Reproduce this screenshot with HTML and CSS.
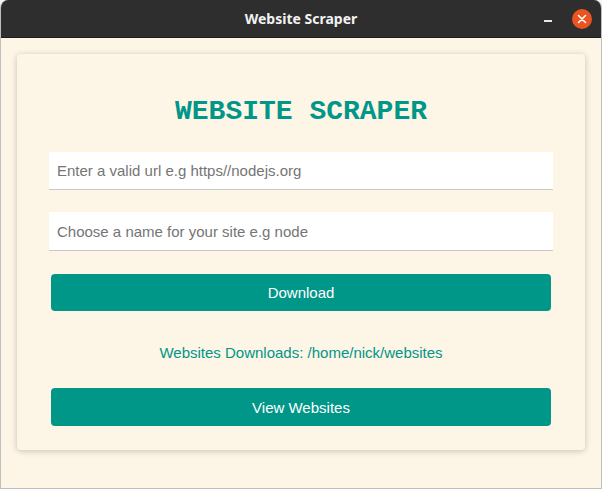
FILE: index.html
```html
<!DOCTYPE html>
<html>
<head>
<meta charset="utf-8">
<link rel="stylesheet" href="styles.css">
</head>
<body>
<div class="window">
  <header class="titlebar">
    <span class="title">Website Scraper</span>
    <div class="controls">
      <span class="minimize"></span>
      <span class="close">
        <svg width="10" height="10" viewBox="0 0 10 10"><path d="M1.5 1.5 L8.5 8.5 M8.5 1.5 L1.5 8.5" stroke="#fff" stroke-width="1.6" stroke-linecap="round"/></svg>
      </span>
    </div>
  </header>
  <main class="content">
    <section class="card">
      <h1 class="heading">WEBSITE SCRAPER</h1>
      <input class="field" type="text" placeholder="Enter a valid url e.g https//nodejs.org">
      <input class="field field-second" type="text" placeholder="Choose a name for your site e.g node">
      <button class="btn btn-download">Download</button>
      <p class="path">Websites Downloads: /home/nick/websites</p>
      <button class="btn btn-view">View Websites</button>
    </section>
  </main>
</div>
</body>
</html>
```

FILE: styles.css
```css
* { box-sizing: border-box; }
html, body {
  margin: 0;
  padding: 0;
  background: #f5f5f5;
}
.window {
  width: 602px;
  height: 489px;
  display: flex;
  flex-direction: column;
  border-radius: 8px 8px 0 0;
  overflow: hidden;
  background: #fdf5e6;
  border: 1px solid #bfbfbf;
  border-top: none;
}
.titlebar {
  position: relative;
  height: 38px;
  flex: none;
  background: #2f2e2e;
  border-bottom: 1px solid #1e1d1d;
  display: flex;
  align-items: center;
  justify-content: center;
}
.title {
  font-family: "Noto Sans", "DejaVu Sans", sans-serif;
  font-weight: 700;
  font-size: 14px;
  color: #f2f2f2;
}
.controls {
  position: absolute;
  right: 9px;
  top: 9px;
  display: flex;
  align-items: center;
  gap: 20px;
}
.minimize {
  display: block;
  width: 8px;
  height: 2px;
  background: #e8e8e8;
  margin-top: 4px;
}
.close {
  width: 20px;
  height: 20px;
  border-radius: 50%;
  background: #e95420;
  display: flex;
  align-items: center;
  justify-content: center;
}
.content {
  flex: 1;
  padding: 16px 16px 0 16px;
}
.card {
  background: #fdf5e6;
  border-radius: 4px;
  box-shadow: 0 1px 6px rgba(0, 0, 0, 0.22);
  padding: 42px 32px 24px 32px;
  display: flex;
  flex-direction: column;
  height: 396px;
}
.heading {
  margin: 0 0 24px 0;
  text-align: center;
  font-family: "Liberation Mono", "Courier New", monospace;
  font-weight: 700;
  font-size: 28px;
  line-height: 32px;
  color: #009688;
}
.field {
  display: block;
  width: 100%;
  height: 39px;
  border: none;
  border-bottom: 1px solid #c9c9c9;
  background: #fff;
  padding: 0 8px;
  font-family: "Liberation Sans", Arial, sans-serif;
  font-size: 15px;
  color: #333;
  outline: none;
}
.field::placeholder {
  color: #757575;
}
.field-second {
  margin-top: 22px;
}
.btn {
  display: block;
  margin: 0 2px;
  height: 38px;
  border: none;
  border-radius: 4px;
  background: #009688;
  color: #fff;
  font-family: "Liberation Sans", Arial, sans-serif;
  font-size: 15px;
}
.btn-download {
  margin-top: 23px;
}
.path {
  margin: 33px 0 0 0;
  text-align: center;
  font-family: "Liberation Sans", Arial, sans-serif;
  font-size: 15px;
  line-height: 18px;
  color: #009688;
}
.btn-view {
  margin-top: 26px;
}
```
